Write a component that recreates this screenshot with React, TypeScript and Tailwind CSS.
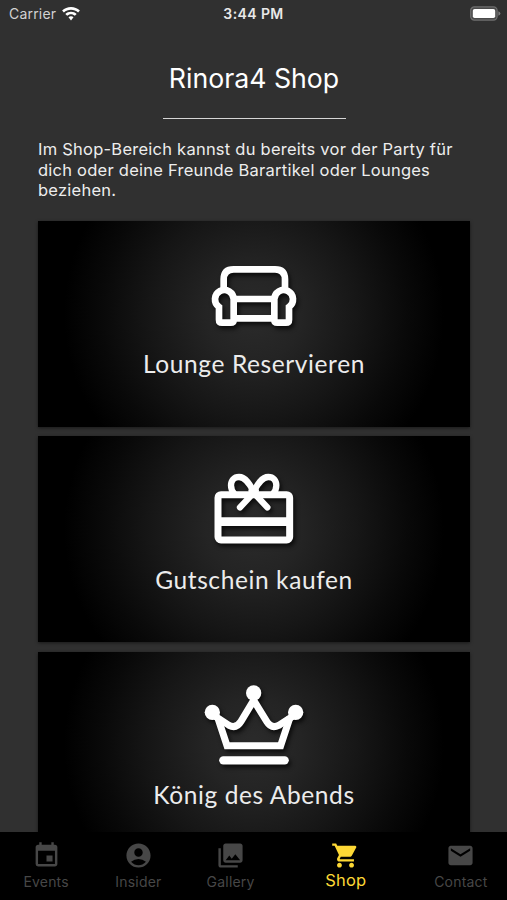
import type { ReactNode } from "react"
import type { IconType } from "react-icons"
import { MdAccountCircle, MdEmail, MdEvent, MdPhotoLibrary, MdShoppingCart } from "react-icons/md"
import clsx from "clsx"

type ShopItem = {
    title: string,
    icon: ReactNode,
}

type Tab = {
    label: string,
    Icon: IconType,
    active?: boolean,
}

const iconClass = "h-[100px] w-[130px] fill-none stroke-white drop-shadow-[2px_3px_2px_rgba(0,0,0,0.7)]"

const SofaIcon = () => (
    <svg viewBox="-3 -18 390 300" className={iconClass} strokeWidth={20}>
        <path d="M101 122V88Q101 58 131 58H255Q285 58 285 88V122" />
        <path d="M132 147H252M132 205H252" />
        <path d="M131 148A28 28 0 1 0 87 171V209Q87 218 96 218H122Q131 218 131 209Z" />
        <path d="M253 148A28 28 0 1 1 297 171V209Q297 218 288 218H262Q253 218 253 209Z" />
    </svg>
)

const GiftIcon = () => (
    <svg viewBox="-3 -17 390 300" className={iconClass} strokeWidth={21}>
        <rect x="84" y="90" width="215" height="136" rx="9" />
        <path d="M84 171H299" strokeWidth={26} />
        <g strokeWidth={19}>
            <path d="M192 82C184 68 170 37 147 37C132 37 123 48 123 62Q123 77 133 88" />
            <path d="M190 82C198 68 212 37 235 37C250 37 259 48 259 62Q259 77 249 88" />
            <path d="M197 78L150 128M185 78L232 128" strokeLinecap="round" />
        </g>
    </svg>
)

const CrownIcon = () => (
    <svg viewBox="-3 0 390 300" className={iconClass} strokeWidth={21}>
        <path d="M67 118L117 151Q139 162 153 139L191 76L230 139Q244 162 266 151L317 118" />
        <path d="M83 127L111 212H272L300 127" />
        <path d="M100 256H284" strokeWidth={25} strokeLinecap="round" />
        <g className="fill-white stroke-none">
            <circle cx="67" cy="112" r="23" />
            <circle cx="191" cy="54" r="23" />
            <circle cx="317" cy="112" r="23" />
        </g>
    </svg>
)

const items: ShopItem[] = [
    { title: "Lounge Reservieren", icon: <SofaIcon /> },
    { title: "Gutschein kaufen", icon: <GiftIcon /> },
    { title: "König des Abends", icon: <CrownIcon /> },
]

const tabs: Tab[] = [
    { label: "Events", Icon: MdEvent },
    { label: "Insider", Icon: MdAccountCircle },
    { label: "Gallery", Icon: MdPhotoLibrary },
    { label: "Shop", Icon: MdShoppingCart, active: true },
    { label: "Contact", Icon: MdEmail },
]

const StatusBar = () => (
    <header className="grid h-[27px] shrink-0 grid-cols-3 items-center px-[9px] text-[14px] text-[#e8e8e8]">
        <div className="flex items-center gap-[6px]">
            <span className="tracking-[0.2px] text-[#d2d2d2]">Carrier</span>
            <svg viewBox="0 0 18 14" className="h-[14px] w-[18px] fill-white">
                <path d="M9 0C5.6 0 2.5 1.3 0.1 3.5L1.9 5.4C3.8 3.7 6.3 2.7 9 2.7S14.2 3.7 16.1 5.4L17.9 3.5C15.5 1.3 12.4 0 9 0Z" />
                <path d="M9 4.7C6.8 4.7 4.8 5.5 3.3 6.9L5.2 8.8C6.2 7.9 7.5 7.3 9 7.3S11.8 7.9 12.8 8.8L14.7 6.9C13.2 5.5 11.2 4.7 9 4.7Z" />
                <path d="M9 9.2C8 9.2 7.2 9.6 6.5 10.2L9 13.6L11.5 10.2C10.8 9.6 10 9.2 9 9.2Z" />
            </svg>
        </div>
        <span className="text-center font-semibold tracking-[0.4px]">3:44 PM</span>
        <svg viewBox="0 0 31 15" className="mr-[-3px] h-[15px] w-[31px] justify-self-end">
            <rect x="0.7" y="0.9" width="26.4" height="13.2" rx="3.6" className="fill-[#4a4a4a] stroke-[#6f6f6f]" strokeWidth="1.2" />
            <rect x="2.8" y="3" width="22.4" height="9" rx="1.8" className="fill-white" />
            <path d="M28.4 5.2Q30.4 6 30.4 7.5T28.4 9.8Z" className="fill-[#7d7d7d]" />
        </svg>
    </header>
)

const ShopCard = ({ title, icon }: ShopItem) => (
    <button
        type="button"
        className="flex h-[206px] w-full shrink-0 flex-col items-center bg-black bg-[radial-gradient(circle_190px_at_50%_45%,#2b2b2b_0%,#242424_25%,#161616_55%,#090909_80%,#000_100%)] pt-[23px] shadow-[0_1px_3px_rgba(0,0,0,0.5)]"
    >
        {icon}
        <span className="mt-[5.4px] font-[Lato,sans-serif] text-[24.5px] leading-[30px] tracking-[0.6px] text-[#ececec]">{title}</span>
    </button>
)

const TabBar = () => (
    <nav className="flex h-[68px] shrink-0 bg-black">
        {tabs.map(({ label, Icon, active }) => (
            <button
                key={label}
                type="button"
                className={clsx("flex flex-col items-center pt-[9px]", active ? "w-[138px] text-[#fdd835]" : "w-[92.25px] text-[#474747]")}
            >
                <Icon size={29} />
                <span className={clsx("leading-5", active ? "text-[16.5px] tracking-[0.2px]" : "mt-[2px] text-[14px] tracking-[0.2px]")}>{label}</span>
            </button>
        ))}
    </nav>
)

export default function App() {
    return (
        <div className="flex h-screen w-full flex-col overflow-hidden bg-[#303030] font-[Inter,sans-serif] text-white">
            <StatusBar />
            <main className="flex min-h-0 flex-1 flex-col overflow-hidden pr-[37px] pl-[38px] pt-[35px]">
                <h1 className="text-center text-[26.7px] leading-8">Rinora4 Shop</h1>
                <hr className="mx-auto mt-6 w-[183px] border-t-[1.5px] border-[#d5d5d5]" />
                <p className="mt-5 text-[16.5px] leading-[20.7px] tracking-[0.24px] text-[#ededed]">
                    Im Shop-Bereich kannst du bereits vor der Party für dich oder deine Freunde Barartikel oder Lounges beziehen.
                </p>
                <div className="mt-[19.6px] flex flex-col gap-[9.7px]">
                    {items.map((item) => (
                        <ShopCard key={item.title} {...item} />
                    ))}
                </div>
            </main>
            <TabBar />
        </div>
    )
}
